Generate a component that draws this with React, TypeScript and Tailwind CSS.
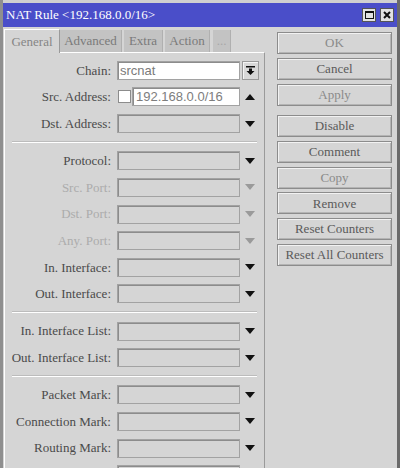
const serif = "font-['Liberation_Serif','Times_New_Roman',serif]";
const sans = "font-['Liberation_Sans',Arial,sans-serif]";

function Arrow({ up = false, dim = false }: { up?: boolean; dim?: boolean }) {
  return (
    <svg width="10" height="6" viewBox="0 0 10 6" className="block">
      <polygon points={up ? '0,6 10,6 5,0' : '0,0 10,0 5,6'} fill={dim ? '#9a9a9a' : '#111'} />
    </svg>
  );
}

function Box({ width = 'w-[123px]', white = false, children }: { width?: string; white?: boolean; children?: React.ReactNode }) {
  return (
    <div
      className={`${width} h-[19px] flex items-center px-[2px] border border-[#a2a2a2] shadow-[inset_1px_1px_0_#8c8c8c] ${
        white ? 'bg-white' : 'bg-[#d5d5d5]'
      }`}
    >
      {children}
    </div>
  );
}

interface RowProps {
  label: string;
  dim?: boolean;
  children?: React.ReactNode;
}

function Row({ label, dim = false, children }: RowProps) {
  return (
    <div className="flex h-[26.67px] items-center">
      <div className={`w-[106px] text-right whitespace-nowrap ${dim ? 'text-[#acacac]' : 'text-[#4a4a4a]'}`}>{label}</div>
      <div className="ml-[6px] flex items-center">{children}</div>
    </div>
  );
}

function Field({ label, dim = false }: { label: string; dim?: boolean }) {
  return (
    <Row label={label} dim={dim}>
      <Box />
      <div className="w-[20px] flex justify-center">
        <Arrow dim={dim} />
      </div>
    </Row>
  );
}

function Separator() {
  return (
    <div className="h-[10.4px] flex items-center px-[7px]">
      <div className="w-full border-t border-[#bcbcbc] border-b-white border-b" />
    </div>
  );
}

function Button({ label, light = false }: { label: string; light?: boolean }) {
  return (
    <div
      className={`h-[22px] w-[115px] flex items-center justify-center border border-[#8c8c8c] shadow-[inset_1px_1px_0_#f2f2f2,inset_-1px_-1px_0_#b4b4b4] ${
        light ? 'text-[#8a8a8a]' : 'text-[#5a5a5a]'
      }`}
    >
      {label}
    </div>
  );
}

function Tab({ label, width, active = false, faint = false }: { label: string; width: string; active?: boolean; faint?: boolean }) {
  return (
    <div
      className={`${width} flex items-center justify-center ${
        active
          ? 'h-[24px] bg-[#d5d5d5] border-l border-t border-white border-r border-r-[#9a9a9a] text-[#858585] relative top-[1px]'
          : 'h-[22px] bg-[#c3c3c3] border-r border-[#b0b0b0] text-[#7a7a7a]'
      } ${faint ? 'text-[#a8a8a8]' : ''}`}
    >
      {label}
    </div>
  );
}

export default function App() {
  return (
    <div className={`w-[400px] h-[468px] overflow-hidden bg-[#d5d5d5] border-l-[3px] border-l-[#8f8f8f] border-r-[3px] border-r-[#6a6a6a] text-[13px] ${serif}`}>
      <div className="h-[3px] bg-[#d0d0d0]" />
      <div className="h-[24px] bg-[#4a4ec9] flex items-center pl-[3px] pr-[3px] text-white text-[13px]">
        <span>NAT Rule &lt;192.168.0.0/16&gt;</span>
        <div className="ml-auto flex gap-[4px]">
          <div className="w-[14px] h-[14px] bg-[#e2e2e2] border border-[#555] flex items-center justify-center">
            <div className="w-[9px] h-[8px] border border-[#111] border-t-[2px]" />
          </div>
          <div className="w-[14px] h-[14px] bg-[#e2e2e2] border border-[#555] flex items-center justify-center">
            <svg width="8" height="8" viewBox="0 0 8 8">
              <path d="M1 1 L7 7 M7 1 L1 7" stroke="#111" strokeWidth="2" />
            </svg>
          </div>
        </div>
      </div>

      <div className="flex mt-[1px]">
        <div className="ml-[1px] w-[261px]">
          <div className="flex items-end h-[24px]">
            <Tab label="General" width="w-[56px]" active />
            <Tab label="Advanced" width="w-[62px]" />
            <div className="w-[2px]" />
            <Tab label="Extra" width="w-[39px]" />
            <div className="w-[2px]" />
            <Tab label="Action" width="w-[45px]" />
            <div className="w-[3px]" />
            <Tab label="..." width="w-[18px]" faint />
          </div>

          <div className="h-[420px] border-t border-l border-white border-r border-r-[#9a9a9a] pt-[4px]">
            <Row label="Chain:">
              <Box white>
                <span className={`${sans} text-[#7a7a7a]`}>srcnat</span>
              </Box>
              <div className="ml-[2px] w-[17px] h-[19px] border border-[#9a9a9a] bg-[#d8d8d8] shadow-[inset_1px_1px_0_#f4f4f4] flex items-center justify-center">
                <svg width="9" height="9" viewBox="0 0 9 9">
                  <rect x="0" y="0" width="9" height="1.5" fill="#111" />
                  <polygon points="3,2.5 6,2.5 6,5 8.5,5 4.5,9 0.5,5 3,5" fill="#111" />
                </svg>
              </div>
            </Row>
            <Row label="Src. Address:">
              <div className="ml-[1px] w-[13px] h-[13px] bg-white border border-[#8c8c8c]" />
              <div className="ml-[1px]">
                <Box width="w-[108px]" white>
                  <span className={`${sans} text-[#7d7d7d] pl-[1px]`}>192.168.0.0/16</span>
                </Box>
              </div>
              <div className="w-[20px] flex justify-center">
                <Arrow up />
              </div>
            </Row>
            <Field label="Dst. Address:" />
            <Separator />
            <Field label="Protocol:" />
            <Field label="Src. Port:" dim />
            <Field label="Dst. Port:" dim />
            <Field label="Any. Port:" dim />
            <Field label="In. Interface:" />
            <Field label="Out. Interface:" />
            <Separator />
            <Field label="In. Interface List:" />
            <Field label="Out. Interface List:" />
            <Separator />
            <Field label="Packet Mark:" />
            <Field label="Connection Mark:" />
            <Field label="Routing Mark:" />
            <Field label="" />
          </div>
        </div>

        <div className="ml-[12px] mt-[4px] flex flex-col gap-[3.75px]">
          <Button label="OK" light />
          <Button label="Cancel" />
          <Button label="Apply" light />
          <div className="h-[2px]" />
          <Button label="Disable" />
          <Button label="Comment" />
          <Button label="Copy" light />
          <Button label="Remove" />
          <Button label="Reset Counters" />
          <Button label="Reset All Counters" />
        </div>
      </div>
    </div>
  );
}
